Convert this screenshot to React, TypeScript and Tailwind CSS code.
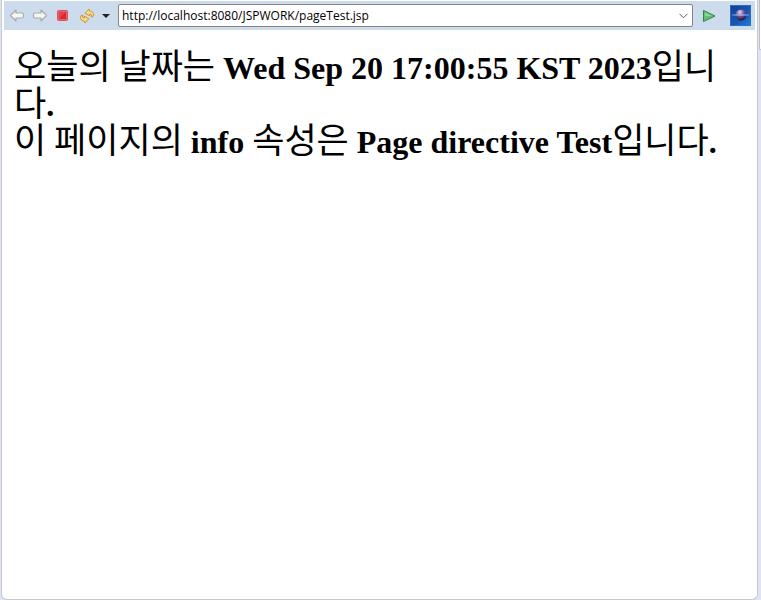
import type { ReactNode } from "react";

function Ko({ children }: { children: ReactNode }) {
  return <span className="font-['Noto_Sans_CJK_KR',sans-serif] text-[35px] leading-6 font-normal">{children}</span>;
}

function ArrowIcon({ className = "" }: { className?: string }) {
  return (
    <svg viewBox="0 0 16 16" className={`size-4 ${className}`} aria-hidden="true">
      <path
        d="M1.5 7.5 7 2v3h6q1.5 0 1.5 1.5v2q0 1.5-1.5 1.5H7v3z"
        fill="#f5f5f3"
        stroke="#a9acae"
        strokeWidth="1.2"
        strokeLinejoin="round"
      />
    </svg>
  );
}

function StopIcon() {
  return (
    <svg viewBox="0 0 16 16" className="size-4" aria-hidden="true">
      <rect x="2.5" y="2.5" width="10" height="10" rx="1" fill="#e8646c" stroke="#d2545c" />
      <rect x="4" y="4" width="7" height="7" fill="#dc2630" />
      <path d="M4 4h7L4 11z" fill="#e8414a" />
    </svg>
  );
}

function RefreshIcon() {
  return (
    <svg viewBox="0 0 16 16" className="size-4" aria-hidden="true">
      <g fill="#fbdc83" stroke="#c98b27" strokeWidth="0.9" strokeLinejoin="round">
        <path d="M6.2 5.2 10 1l.5 2c2.6-.2 4.3 1.6 4.2 4.6l-2 1.6c.2-2.1-.6-3.2-2.1-3.2l.3 2z" />
        <path d="M9.8 10.8 6 15l-.5-2C2.9 13.2 1.2 11.4 1.3 8.4l2-1.6c-.2 2.1.6 3.2 2.1 3.2l-.3-2z" />
      </g>
    </svg>
  );
}

function GlobeIcon() {
  return (
    <svg viewBox="0 0 21 21" className="size-[21px]" aria-hidden="true">
      <defs>
        <linearGradient id="sky" x1="0" y1="0" x2="1" y2="1">
          <stop offset="0" stopColor="#123e91" />
          <stop offset="0.6" stopColor="#1559b5" />
          <stop offset="1" stopColor="#1b83dc" />
        </linearGradient>
        <radialGradient id="planet" cx="0.4" cy="0.25" r="0.75">
          <stop offset="0" stopColor="#e6d6f2" />
          <stop offset="0.5" stopColor="#6f5499" />
          <stop offset="1" stopColor="#1d1445" />
        </radialGradient>
      </defs>
      <path d="M0 0h21v21H0z" fill="url(#sky)" />
      <path d="M.5.5h20v20H.5z" fill="none" stroke="#2b6cc4" />
      <circle cx="11" cy="10" r="5.5" fill="url(#planet)" />
      <path d="M2 9.5q9-.8 17 0v1q-8 .8-17 0z" fill="#a9bdf0" fillOpacity="0.65" />
    </svg>
  );
}

export default function App() {
  return (
    <div className="flex h-screen bg-[#dfe4f5] pl-px">
      <div className="flex min-w-0 flex-1 flex-col rounded-b-md border-x border-b border-[#c9c9cd] bg-white px-[2px] pt-px">
        <header className="flex h-[29px] shrink-0 items-center bg-[#cddcec] pr-1 pl-[5px]">
          <button type="button" aria-label="Back" className="mr-[7px]">
            <ArrowIcon />
          </button>
          <button type="button" aria-label="Forward" className="mr-[7px]">
            <ArrowIcon className="-scale-x-100" />
          </button>
          <button type="button" aria-label="Stop" className="mr-2">
            <StopIcon />
          </button>
          <button type="button" aria-label="Refresh" className="mr-[7px]">
            <RefreshIcon />
          </button>
          <button type="button" aria-label="Refresh options" className="mr-2">
            <svg viewBox="0 0 8 4" className="h-1 w-2" aria-hidden="true">
              <path d="M0 0h8L4 4z" fill="#202020" />
            </svg>
          </button>
          <div className="flex h-[23px] min-w-0 flex-1 items-center rounded-[2px] border border-[#858585] bg-white pr-1 pl-[3px]">
            <input
              aria-label="Address"
              defaultValue="http://localhost:8080/JSPWORK/pageTest.jsp"
              className="min-w-0 flex-1 bg-transparent font-['Open_Sans',sans-serif] text-xs leading-4 text-black outline-none"
            />
            <button type="button" aria-label="Show history">
              <svg viewBox="0 0 9 6" className="h-[6px] w-[9px]" aria-hidden="true">
                <path d="m.5.8 4 4 4-4" fill="none" stroke="#606060" />
              </svg>
            </button>
          </div>
          <button type="button" aria-label="Go" className="mr-[13px] ml-2">
            <svg viewBox="0 0 16 16" className="size-4" aria-hidden="true">
              <path d="M2.5 2.5v11L14 8z" fill="#67bd77" stroke="#2c8745" strokeLinejoin="round" />
              <path d="M4 4.5V8h7z" fill="#8fd49a" />
            </svg>
          </button>
          <button type="button" aria-label="Open web browser">
            <GlobeIcon />
          </button>
        </header>
        <main className="px-[10px] pt-5">
          <h1 className="font-['Liberation_Serif',serif] text-[32px] leading-[37px] font-bold text-black">
            <Ko>오늘의 날짜는</Ko> Wed Sep 20 17:00:55 KST 2023<Ko>입니다</Ko>.
            <br />
            <Ko>이 페이지의</Ko> info <Ko>속성은</Ko> Page directive Test<Ko>입니다</Ko>.
          </h1>
        </main>
      </div>
      <div className="w-[3px] shrink-0">
        <div className="ml-px h-[50px] rounded-bl-sm border-b border-l border-[#babdcb] bg-white" />
      </div>
    </div>
  );
}
